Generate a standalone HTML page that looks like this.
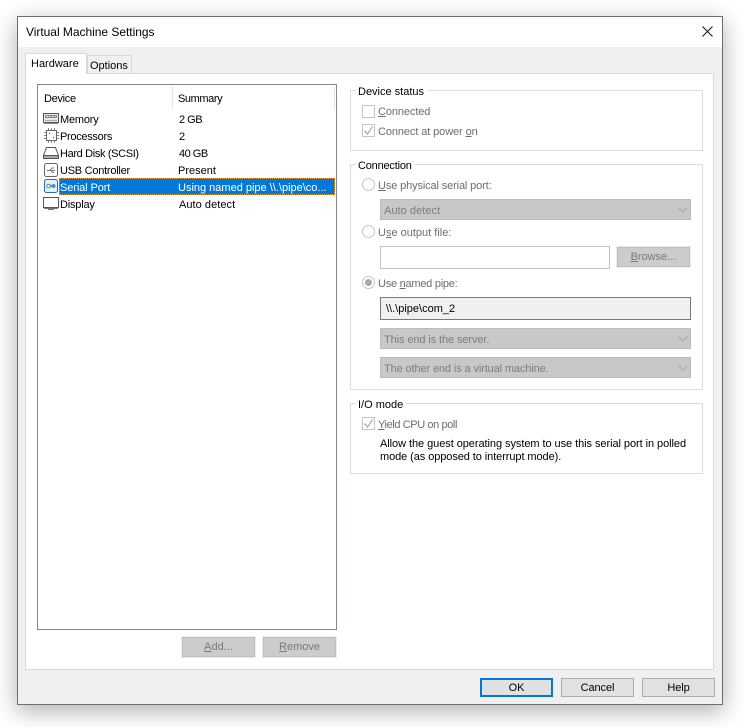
<!DOCTYPE html>
<html><head><meta charset="utf-8"><style>
html,body{margin:0;padding:0;background:#fff;width:744px;height:727px;overflow:hidden}
*{box-sizing:border-box}
body{font-family:"Liberation Sans",sans-serif;font-size:11px;color:#000}
#w{position:absolute;left:17px;top:16px;width:706px;height:689px;background:#f0f0f0;border:1px solid #6e6e6e;box-shadow:0 6px 22px rgba(0,0,0,.32)}
.a{position:absolute}
.t{position:absolute;white-space:nowrap;line-height:14px;height:14px;letter-spacing:-.1px;margin-top:1px}
.g{color:#6d6d6d}
.box{position:absolute;background:#fff;border:1px solid #dcdcdc}
.sel{position:absolute;background:#c8c8c8;border:1px solid #bcbcbc;left:380px;width:311px;height:21px}
.btn{position:absolute;background:#e1e1e1;border:1px solid #adadad;text-align:center;line-height:18px;height:19px;width:73px;letter-spacing:-.1px}
.dis{position:absolute;background:#cccccc;border:1px solid #bfbfbf;outline:1px solid #ececec;text-align:center;color:#787878;line-height:19px;height:20px;width:73px}
.chk{position:absolute;width:13px;height:13px;border:1px solid #c4c4c4;background:#fff}
svg{position:absolute;overflow:visible}
</style></head><body>
<div id="w"></div>
<div class="a" style="left:18px;top:17px;width:704px;height:30px;background:#fff"></div>
<span class="t" style="left:26px;top:25px;font-size:12px;letter-spacing:-.03px;margin-top:0">Virtual Machine Settings</span>
<svg style="left:702px;top:26px" width="11" height="11"><path d="M.5.5l10 10M10.500.5l-10 10" stroke="#111" stroke-width="1" fill="none"/></svg>

<div class="box" style="left:25px;top:73px;width:689px;height:597px;border-color:#d9d9d9"></div>
<div class="a" style="left:87px;top:55px;width:45px;height:19px;background:#f0f0f0;border:1px solid #d9d9d9;border-bottom:1px solid #d9d9d9"></div>
<div class="a" style="left:25px;top:53px;width:62px;height:21px;background:#fff;border:1px solid #d9d9d9;border-bottom:none"></div>
<span class="t" style="left:31px;top:56px;letter-spacing:0">Hardware</span>
<span class="t" style="left:90px;top:58px;letter-spacing:0">Options</span>

<div class="a" style="left:37px;top:84px;width:300px;height:546px;background:#fff;border:1px solid #828790"></div>
<div class="a" style="left:172px;top:86px;width:1px;height:24px;background:#e5e5e5"></div>
<div class="a" style="left:334px;top:86px;width:1px;height:24px;background:#e5e5e5"></div>
<span class="t" style="left:44px;top:91px;letter-spacing:-.3px">Device</span>
<span class="t" style="left:178px;top:91px;letter-spacing:-.4px">Summary</span>

<div class="a" style="left:59px;top:178px;width:276px;height:17px;background:#0078d7;outline:1px dotted #f0a040;outline-offset:-1px"></div>

<span class="t" style="left:60px;top:112px;letter-spacing:-.2px">Memory</span><span class="t" style="left:179px;top:112px;letter-spacing:-.5px">2 GB</span>
<span class="t" style="left:60px;top:129px;letter-spacing:-.3px">Processors</span><span class="t" style="left:179px;top:129px">2</span>
<span class="t" style="left:60px;top:146px;letter-spacing:-.35px">Hard Disk (SCSI)</span><span class="t" style="left:179px;top:146px;letter-spacing:-.5px">40 GB</span>
<span class="t" style="left:60px;top:163px;letter-spacing:-.25px">USB Controller</span><span class="t" style="left:178px;top:163px;letter-spacing:0">Present</span>
<span class="t" style="left:60px;top:180px;color:#fff;letter-spacing:-.1px">Serial Port</span><span class="t" style="left:178px;top:180px;color:#fff;letter-spacing:0">Using named pipe \\.\pipe\co...</span>
<span class="t" style="left:60px;top:197px;letter-spacing:-.2px">Display</span><span class="t" style="left:179px;top:197px;letter-spacing:.05px">Auto detect</span>

<!-- icons -->
<svg style="left:43px;top:112px" width="17" height="14"><rect x=".5" y="1.500" width="15" height="9" fill="#e8e8e8" stroke="#555"/><rect x="2" y="3" width="12" height="3" fill="#8a8a8a"/><path d="M3 4.500h10" stroke="#ddd" stroke-dasharray="2 1"/><path d="M2 8.500h12" stroke="#aaa"/><path d="M1 11.500h14" stroke="#888"/></svg>
<svg style="left:44px;top:128px" width="15" height="15"><rect x="2.500" y="2.500" width="10" height="10" fill="#fff" stroke="#666"/><path d="M0 4.500h2M0 7.500h2M0 10.500h2M13 4.500h2M13 7.500h2M13 10.500h2M4.500 0v2M7.500 0v2M10.500 0v2M4.500 13v2M7.500 13v2M10.500 13v2" stroke="#888"/><path d="M5 5h1v1H5zM9 9h1v1H9z" fill="#333"/></svg>
<svg style="left:43px;top:146px" width="17" height="14"><path d="M3.500 1.500h9l3 8v3h-15v-3z" fill="#fff" stroke="#555"/><path d="M.5 9.500h15" stroke="#555"/><rect x="1" y="10" width="14" height="2" fill="#aaa"/></svg>
<svg style="left:44px;top:163px" width="14" height="14"><rect x=".5" y=".5" width="13" height="13" rx="2" fill="#fff" stroke="#666"/><path d="M3 7.500h8M6 7.500l2-2.500h2M7 7.500l1.500 2H10" stroke="#777" fill="none"/></svg>
<svg style="left:44px;top:179px" width="14" height="15"><rect x=".5" y=".5" width="13" height="13" rx="2" fill="#e4f0fa" stroke="#2f6ea8"/><circle cx="4.500" cy="7" r="1.800" fill="#fff" stroke="#4a7fb0"/><circle cx="9.500" cy="7" r="2" fill="#4a90d0"/><path d="M6 7h2" stroke="#555"/></svg>
<svg style="left:43px;top:197px" width="17" height="14"><rect x=".5" y=".5" width="15" height="10" fill="#fff" stroke="#555"/><path d="M1 11.500h14" stroke="#777"/><path d="M5 12.500h6" stroke="#777"/></svg>

<div class="dis" style="left:182px;top:637px"><u>A</u>dd...</div>
<div class="dis" style="left:263px;top:637px"><u>R</u>emove</div>

<!-- Device status -->
<div class="box" style="left:350px;top:90px;width:353px;height:61px"></div>
<span class="t" style="left:356px;top:84px;background:#fff;padding:0 3px 0 2px;letter-spacing:0">Device status</span>
<div class="chk" style="left:362px;top:105px"></div>
<span class="t g" style="left:378px;top:104px"><u>C</u>onnected</span>
<div class="chk" style="left:362px;top:124px"></div>
<svg style="left:362px;top:124px" width="13" height="13"><path d="M2.500 6.500l3 3.500 5-7.500" stroke="#9a9a9a" fill="none"/></svg>
<span class="t g" style="left:378px;top:124px">Connect at power <u>o</u>n</span>

<!-- Connection -->
<div class="box" style="left:350px;top:164px;width:353px;height:226px"></div>
<span class="t" style="left:356px;top:158px;background:#fff;padding:0 3px 0 2px;letter-spacing:-.2px">Connection</span>
<svg style="left:362px;top:178px" width="13" height="13"><circle cx="6.500" cy="6.500" r="6" fill="#fff" stroke="#c4c4c4"/></svg>
<span class="t g" style="left:378px;top:178px;letter-spacing:-.13px"><u>U</u>se physical serial port:</span>
<div class="sel" style="top:199px"></div>
<span class="t" style="left:384px;top:203px;color:#7c7c7c;letter-spacing:.05px">Auto detect</span>
<svg style="left:678px;top:207px" width="10" height="6"><path d="M.5.500l4.500 4.500 4.500-4.500" stroke="#a8a8a8" fill="none"/></svg>
<svg style="left:362px;top:225px" width="13" height="13"><circle cx="6.500" cy="6.500" r="6" fill="#fff" stroke="#c4c4c4"/></svg>
<span class="t g" style="left:378px;top:225px;letter-spacing:0">U<u>s</u>e output file:</span>
<div class="a" style="left:380px;top:246px;width:230px;height:23px;background:#fff;border:1px solid #c4c4c4"></div>
<div class="dis" style="left:617px;top:247px;line-height:19px"><u>B</u>rowse...</div>
<svg style="left:362px;top:276px" width="13" height="13"><circle cx="6.500" cy="6.500" r="6" fill="#fff" stroke="#c4c4c4"/><circle cx="6.500" cy="6.500" r="3.500" fill="#a8a8a8"/></svg>
<span class="t g" style="left:378px;top:276px;letter-spacing:-.25px">Use <u>n</u>amed pipe:</span>
<div class="a" style="left:380px;top:297px;width:311px;height:23px;background:#f0f0f0;border:1px solid #7a7a7a"></div>
<span class="t" style="left:386px;top:301px;letter-spacing:0">\\.\pipe\com_2</span>
<div class="sel" style="top:328px"></div>
<span class="t" style="left:384px;top:332px;color:#7c7c7c">This end is the server.</span>
<svg style="left:678px;top:336px" width="10" height="6"><path d="M.5.500l4.500 4.500 4.500-4.500" stroke="#a8a8a8" fill="none"/></svg>
<div class="sel" style="top:357px"></div>
<span class="t" style="left:384px;top:361px;color:#7c7c7c;letter-spacing:-.12px">The other end is a virtual machine.</span>
<svg style="left:678px;top:365px" width="10" height="6"><path d="M.5.500l4.500 4.500 4.500-4.500" stroke="#a8a8a8" fill="none"/></svg>

<!-- I/O mode -->
<div class="box" style="left:350px;top:403px;width:353px;height:71px"></div>
<span class="t" style="left:356px;top:397px;background:#fff;padding:0 3px 0 2px;letter-spacing:0">I/O mode</span>
<div class="chk" style="left:362px;top:417px"></div>
<svg style="left:362px;top:417px" width="13" height="13"><path d="M2.500 6.500l3 3.500 5-7.500" stroke="#9a9a9a" fill="none"/></svg>
<span class="t g" style="left:378px;top:417px;letter-spacing:-.4px"><u>Y</u>ield CPU on poll</span>
<span class="t" style="left:380px;top:436px;letter-spacing:-.06px">Allow the guest operating system to use this serial port in polled</span>
<span class="t" style="left:380px;top:449px;letter-spacing:-.08px">mode (as opposed to interrupt mode).</span>

<div class="btn" style="left:480px;top:678px;border:2px solid #0078d7;line-height:16px">OK</div>
<div class="btn" style="left:561px;top:678px">Cancel</div>
<div class="btn" style="left:642px;top:678px">Help</div>
</body></html>
